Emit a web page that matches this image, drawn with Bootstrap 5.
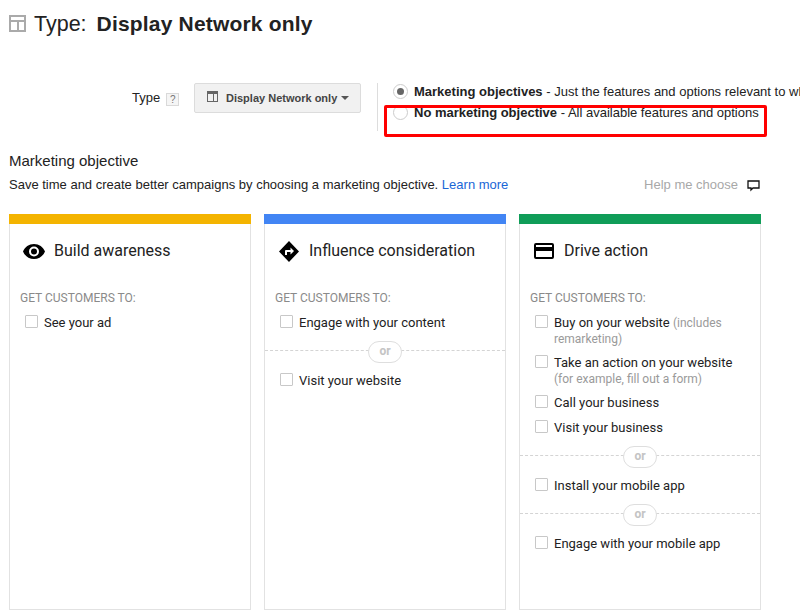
<!DOCTYPE html>
<html lang="en">
<head>
<meta charset="utf-8">
<title>Type</title>
<link href="https://cdn.jsdelivr.net/npm/bootstrap@5.3.0/dist/css/bootstrap.min.css" rel="stylesheet">
<style>
html,body{width:800px;height:616px;overflow:hidden;background:#fff}
body{font-family:"Liberation Sans",Arial,sans-serif;font-size:13px;color:#222;position:relative}
.ttl{padding:12px 0 0 9px;height:83px;font-size:21.500px;line-height:24px}
.ttl svg{margin:3px 8px 0 0;flex:none}
.ttl b{margin-left:10px;font-size:21px;letter-spacing:.18px}
.tyrow{height:69px;padding-left:132px}
.tylab{font-size:13px;width:62px;flex:none;padding-top:7px;line-height:16px;height:30px;white-space:nowrap}
.hlp{display:inline-block;width:13px;height:13px;border:1px solid #d9d9d9;background:#f5f5f5;color:#777;font-size:10px;line-height:11px;text-align:center;margin-left:6px;vertical-align:-1px}
.dd{width:167px;flex:none;height:30px;background:#f1f1f1;border:1px solid #dcdcdc;border-radius:2px;font-size:11px;font-weight:700;color:#444;line-height:28px;padding-left:12px;white-space:nowrap}
.dd svg{margin-right:8px;vertical-align:0}
.dd i{display:inline-block;margin-left:4px;border:4px solid transparent;border-top-color:#555;border-bottom:0;vertical-align:2px}
.vsep{width:1px;flex:none;height:48px;background:#ddd;margin:0 15px 0 16px}
.rads{white-space:nowrap;font-size:13px;line-height:16px}
.rdl{height:21px;display:flex;align-items:flex-start;padding-top:1px}
.rdo{width:15px;height:15px;border-radius:50%;border:1px solid #ccc;margin-right:6px;flex:none;background:#fff;display:flex;align-items:center;justify-content:center}
.rdo.on::after{content:"";width:7px;height:7px;border-radius:50%;background:#666}
.redbx{position:absolute;left:384px;top:105px;width:383px;height:32px;border:3px solid #f00;border-radius:2px}
.mobj{padding:0 40px 0 9px}
.mobjt{font-size:15px;line-height:18px;margin-bottom:6px}
.mobjs{font-size:13px;line-height:16px;height:38px}
.mobjs span:first-child{position:relative;top:1px}
.mobjs a{color:#1a66d6;text-decoration:none}
.hmc{color:#a8a8a8;font-size:13px;position:relative;top:1px}
.hmc svg{margin-left:9px;vertical-align:-3px}
.cols{padding-left:9px;gap:13px}
.pnl{width:242px;height:396px;border:1px solid #e2e2e2;border-top:0;font-family:Roboto,sans-serif}
.bar{height:10px;margin:0 -1px}
.by{background:#f4b400}.bb{background:#4285f4}.bg{background:#0f9d58}
.phd{height:54px;padding:15px 0 0 12px;font-size:16px;line-height:24px;color:#222}
.phd svg{margin-right:8px;flex:none}
.gct{font-size:12px;color:#8a8a8a;line-height:14px;margin:13px 0 0 10px;height:24px}
.chk{display:flex;padding-left:15px;font-size:13px;line-height:16px;color:#222}
.chk s{width:13px;height:13px;border:1px solid #c8c8c8;border-radius:1px;margin-right:6px;flex:none}
.chk em{font-style:normal;color:#9a9a9a;font-size:12px}
.chk div{width:190px}
.orr{position:relative;height:1px;border-top:1px dashed #d4d4d4;text-align:center;margin-top:19px;margin-bottom:22px}
.orr span{position:absolute;left:103px;top:-10px;width:34px;height:22px;border:1px solid #dedede;border-radius:11px;background:#fff;color:#c4c4c4;font-size:12px;font-weight:700;line-height:18px}
.g1{margin-top:8px}.g2{margin-top:8px}.g3{margin-top:9px}
</style>
</head>
<body>
<div class="ttl d-flex align-items-start">
<svg width="17" height="17" viewBox="0 0 17 17"><path fill="#aaa" d="M0 0h17v17H0zM2 2v3h13V2zM2 7v8h6V7zM10 7v8h5V7z" fill-rule="evenodd"/></svg>
<span>Type:</span><b>Display Network only</b>
</div>
<div class="tyrow d-flex">
<div class="tylab">Type<span class="hlp">?</span></div>
<div class="dd"><svg width="11" height="11" viewBox="0 0 11 11"><path fill="#666" fill-rule="evenodd" d="M0 0h11v11H0zM1 3v7h5V3zM7 3v7h3V3z"/></svg>Display Network only<i></i></div>
<div class="vsep"></div>
<div class="rads">
<div class="rdl"><span class="rdo on"></span><span><b>Marketing objectives</b> - Just the features and options relevant to what you want to achieve</span></div>
<div class="rdl"><span class="rdo"></span><span><b>No marketing objective</b> - All available features and options</span></div>
</div>
</div>
<div class="redbx"></div>
<div class="mobj">
<div class="mobjt">Marketing objective</div>
<div class="mobjs d-flex justify-content-between"><span>Save time and create better campaigns by choosing a marketing objective. <a href="#">Learn more</a></span>
<span class="hmc">Help me choose<svg width="13" height="13" viewBox="0 0 13 13"><path fill="none" stroke="#111" stroke-width="1.3" d="M1 2h11v7H6L4 11V9H1z"/></svg></span></div>
</div>
<div class="cols d-flex">
<div class="pnl"><div class="bar by"></div>
<div class="phd d-flex"><svg width="24" height="24" viewBox="0 0 24 24"><path d="M12 5C7 5 2.700 8.100 1 12.500 2.700 16.900 7 20 12 20s9.300-3.100 11-7.500C21.300 8.100 17 5 12 5zm0 12.500a5 5 0 1 1 0-10 5 5 0 0 1 0 10zm0-8a3 3 0 1 0 0 6 3 3 0 0 0 0-6z"/></svg>Build awareness</div>
<div class="gct">GET CUSTOMERS TO:</div>
<label class="chk"><s></s><div>See your ad</div></label>
</div>
<div class="pnl"><div class="bar bb"></div>
<div class="phd d-flex"><svg width="24" height="24" viewBox="0 0 24 24"><path fill-rule="evenodd" d="M12 2 22 12.500 12 23 2 12.500zM13.500 8.500V11H9a1 1 0 0 0-1 1v4h2v-3h3.500v2.500L17 12z"/></svg>Influence consideration</div>
<div class="gct">GET CUSTOMERS TO:</div>
<label class="chk"><s></s><div>Engage with your content</div></label>
<div class="orr"><span>or</span></div>
<label class="chk"><s></s><div>Visit your website</div></label>
</div>
<div class="pnl"><div class="bar bg"></div>
<div class="phd d-flex"><svg width="24" height="24" viewBox="0 0 24 24"><path fill-rule="evenodd" d="M4 4h16a2 2 0 0 1 2 2v12a2 2 0 0 1-2 2H4a2 2 0 0 1-2-2V6a2 2 0 0 1 2-2zM4 6v2h16V6zM4 12v6h16v-6z"/></svg>Drive action</div>
<div class="gct">GET CUSTOMERS TO:</div>
<label class="chk"><s></s><div>Buy on your website <em>(includes remarketing)</em></div></label>
<label class="chk g1"><s></s><div>Take an action on your website <em>(for example, fill out a form)</em></div></label>
<label class="chk g2"><s></s><div>Call your business</div></label>
<label class="chk g3"><s></s><div>Visit your business</div></label>
<div class="orr"><span>or</span></div>
<label class="chk"><s></s><div>Install your mobile app</div></label>
<div class="orr"><span>or</span></div>
<label class="chk"><s></s><div>Engage with your mobile app</div></label>
</div>
</div>
</body>
</html>
